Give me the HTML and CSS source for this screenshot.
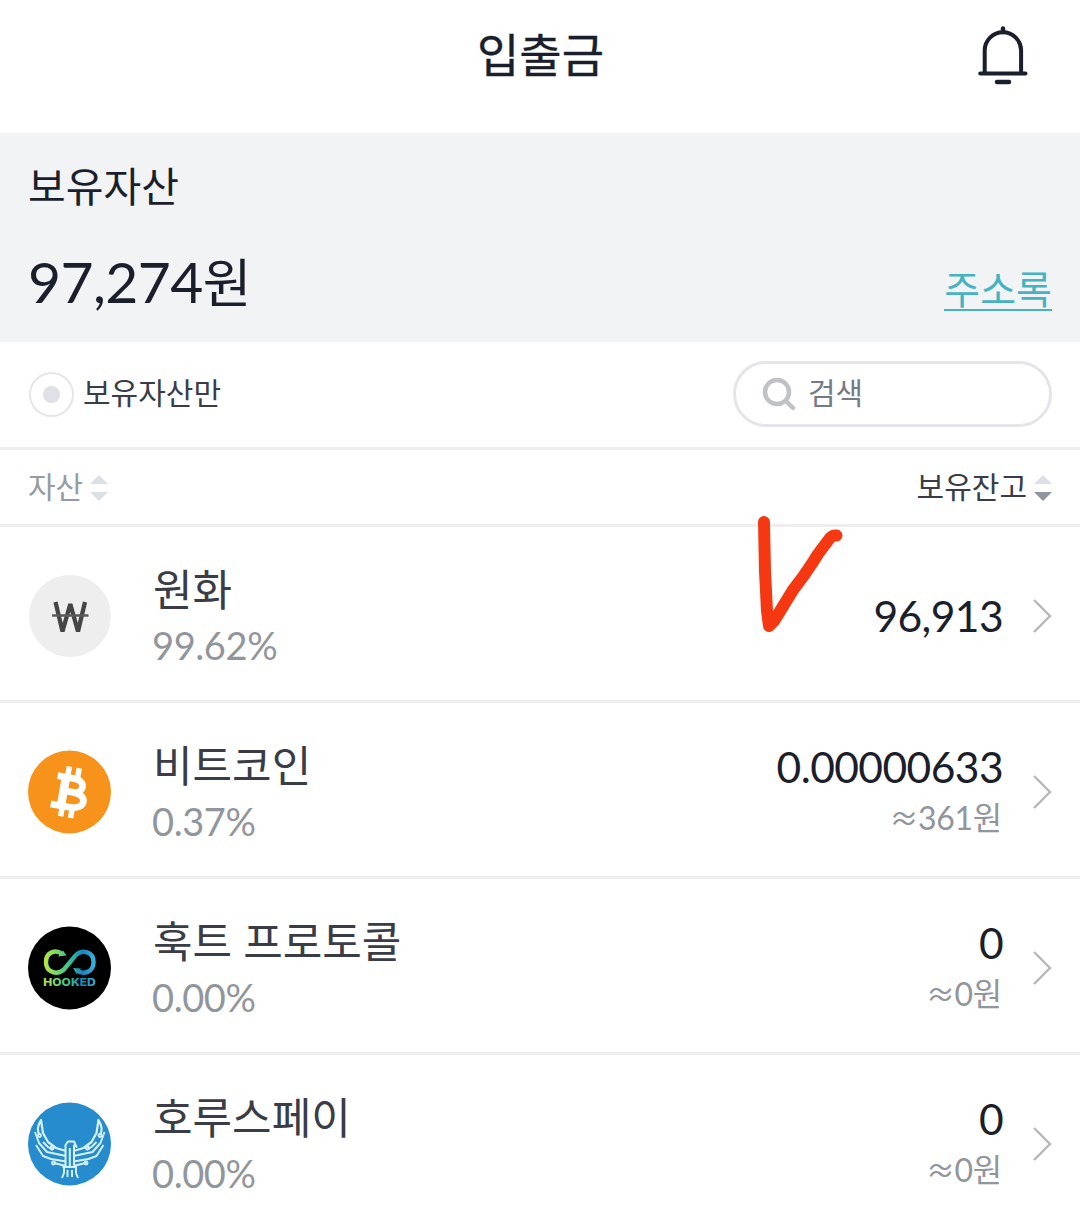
FILE: index.html
```html
<!DOCTYPE html>
<html lang="ko">
<head>
  <meta charset="UTF-8" />
  <title>입출금</title>
  <link rel="stylesheet" href="styles.css">
</head>
<body>
  <header class="header">
    <h1>입출금</h1>
    <svg class="bell" width="52" height="62" viewBox="0 0 52 62" fill="none" stroke="#1b1f2b" stroke-width="4" stroke-linecap="round">
      <path d="M7.700 49V26.500a18.200 18.200 0 0 1 36.400 0V49M3.200 49.400H48.500"/>
      <path d="M20 58H32M26 4.500V8" stroke-width="4.500"/>
    </svg>
  </header>

  <section class="summary">
    <p class="summary-label">보유자산</p>
    <div class="summary-row">
      <strong class="total">97,274<span>원</span></strong>
      <a class="address">주소록</a>
    </div>
  </section>

  <div class="filter">
    <label class="only"><span class="radio"></span><span class="text">보유자산만</span></label>
    <div class="search">
      <svg width="34" height="34" viewBox="0 0 34 34" fill="none" stroke="#bfc2c7" stroke-width="4.500" stroke-linecap="round">
        <circle cx="15" cy="15" r="12"/>
        <path d="M24 24L31 31"/>
      </svg>
      <span class="text">검색</span>
    </div>
  </div>

  <div class="list-head">
    <div class="sort muted"><span class="text">자산</span>
      <svg width="18" height="26" viewBox="0 0 18 26"><path d="M0 9L9 0L18 9Z" fill="#dcdfe3"/><path d="M0 17L9 26L18 17Z" fill="#dcdfe3"/></svg>
    </div>
    <div class="sort"><span class="text">보유잔고</span>
      <svg width="18" height="26" viewBox="0 0 18 26"><path d="M0 9L9 0L18 9Z" fill="#dcdfe3"/><path d="M0 17L9 26L18 17Z" fill="#91969e"/></svg>
    </div>
  </div>

  <ul class="assets">
    <li class="asset">
      <svg class="coin" viewBox="0 0 84 84">
        <circle cx="42" cy="42" r="41" fill="#eee"/>
        <path d="M27.500 28L34.500 57.500L42.300 30L50 57.500L57 28" fill="none" stroke="#454545" stroke-width="4.300" stroke-linejoin="bevel"/>
        <path d="M24 41.500H60.500" stroke="#5a5a5a" stroke-width="2.600"/>
      </svg>
      <div class="info"><p class="name">원화</p><p class="rate">99.62%</p></div>
      <div class="balance"><p class="amount">96,913</p></div>
      <svg class="arrow" viewBox="0 0 20 36"><path d="M2 2L18 18L2 34"/></svg>
      <!-- 손으로 그린 체크 표시 -->
      <svg class="mark" width="90" height="124" viewBox="0 0 90 124">
        <path d="M10 11L11 60L13 100L15 115L20 110L39 79Q50 65 59 51L64 43L76 27Q79 24 82.500 24.500"/>
      </svg>
    </li>
    <li class="asset">
      <svg class="coin" viewBox="0 0 84 84">
        <circle cx="41.500" cy="42" r="41.500" fill="#f7931a"/>
        <g transform="rotate(10 42 42)" fill="none" stroke="#fff">
          <path d="M27 28H44C56.500 28 56.500 41.800 44 41.800H36M45 41.800C61 41.800 60.500 57 45 57H25" stroke-width="6.800"/>
          <path d="M35.500 27V58" stroke-width="8.500"/>
          <path d="M37 17V28M47 17V28M37 57V67.500M47 57V67.500" stroke-width="5.500"/>
        </g>
      </svg>
      <div class="info"><p class="name">비트코인</p><p class="rate">0.37%</p></div>
      <div class="balance"><p class="amount">0.00000633</p><p class="krw"><i>≈</i>361원</p></div>
      <svg class="arrow" viewBox="0 0 20 36"><path d="M2 2L18 18L2 34"/></svg>
    </li>
    <li class="asset">
      <svg class="coin" viewBox="0 0 84 84">
        <defs>
          <linearGradient id="hook" gradientUnits="userSpaceOnUse" x1="16" y1="0" x2="68" y2="0">
            <stop offset="0" stop-color="#b5e842"/>
            <stop offset=".45" stop-color="#43c58b"/>
            <stop offset=".75" stop-color="#1685c4"/>
            <stop offset="1" stop-color="#3cb8e0"/>
          </linearGradient>
        </defs>
        <circle cx="41.500" cy="42" r="41.500" fill="#000"/>
        <path d="M34 28C28 23 18 26 18 36C18 46.500 29 49.500 36 43.500L47.500 29.500C54.500 22.500 65.500 26 65.500 36C65.500 46.500 55 49 49 44.500" fill="none" stroke="url(#hook)" stroke-width="4.400"/>
        <path d="M30 30.500L38.500 29.500L35 24.500ZM45 42L53 42.500L48.500 48Z" fill="url(#hook)"/>
        <text x="15.300" y="59.700" textLength="52.500" lengthAdjust="spacingAndGlyphs" class="hooked" fill="url(#hook)">HOOKED</text>
      </svg>
      <div class="info"><p class="name">훅트 프로토콜</p><p class="rate">0.00%</p></div>
      <div class="balance"><p class="amount">0</p><p class="krw"><i>≈</i>0원</p></div>
      <svg class="arrow" viewBox="0 0 20 36"><path d="M2 2L18 18L2 34"/></svg>
    </li>
    <li class="asset">
      <svg class="coin" viewBox="0 0 84 84">
        <circle cx="41.500" cy="42" r="41.500" fill="#268ccd"/>
        <g fill="none" stroke="#d5f2fa" stroke-width="1.900" stroke-linejoin="round">
          <g id="wing">
            <path d="M11 32C9 28 10 23 13 18L15 31L20 40L28 46L38 49" stroke-width="2.200"/>
            <path d="M7 30L11 41L19 50L38 54M15 40L20 45L25 48M8 43L15 54L23 57L38 59.500M26 61L38 64"/>
            <circle cx="11.500" cy="33.500" r="1.500"/>
            <circle cx="24" cy="46" r="1.500"/>
            <circle cx="25.500" cy="61" r="1.500"/>
          </g>
          <use href="#wing" transform="translate(83.500 0) scale(-1 1)"/>
          <path d="M37.500 64V43L40 39.500H46L48.500 45L46 43.500V63M41.800 46V66" stroke-width="2"/>
          <path d="M34.500 65H49M36 65V71L34 76M48 65V71L50 76M39.500 68V75M44 68V75"/>
        </g>
      </svg>
      <div class="info"><p class="name">호루스페이</p><p class="rate">0.00%</p></div>
      <div class="balance"><p class="amount">0</p><p class="krw"><i>≈</i>0원</p></div>
      <svg class="arrow" viewBox="0 0 20 36"><path d="M2 2L18 18L2 34"/></svg>
    </li>
  </ul>
</body>
</html>
```
FILE: styles.css
```css
* {
  box-sizing: border-box;
}

html, body {
  margin: 0;
  padding: 0;
  height: 100%;
  overflow: hidden;
}

body {
  background: #fff;
  color: #1b1f2b;
  font-family: Lato, "Noto Sans CJK KR", sans-serif;
}

h1, p, ul {
  margin: 0;
  padding: 0;
  font-weight: 400;
}

svg {
  display: block;
  flex: none;
}

.header {
  display: grid;
  grid-template-columns: 1fr auto 1fr;
  height: 133px;
  padding: 24px 51px 0 52px;
}

.header h1 {
  grid-column: 2;
  font-size: 46px;
  line-height: 62px;
  -webkit-text-stroke: 0.4px #1b1f2b;
}

.bell {
  justify-self: end;
}

.summary {
  height: 209px;
  padding: 28px 28px 0;
  background: #f1f3f5;
}

.summary-label {
  font-size: 41px;
  line-height: 52px;
}

.summary-row {
  display: flex;
  justify-content: space-between;
  margin-top: 32px;
}

.total {
  font-size: 57px;
  font-weight: 400;
  line-height: 72px;
  letter-spacing: -0.6px;
}

.total span {
  font-size: 53px;
}

.address {
  align-self: flex-start;
  height: 46px;
  margin-top: 20px;
  border-bottom: 2px solid #46b3c0;
  color: #46b3c0;
  font-size: 39px;
  line-height: 48px;
}

.filter {
  display: flex;
  justify-content: space-between;
  align-items: center;
  height: 108px;
  padding: 0 28px 1px 29px;
  border-bottom: 3px solid #eee;
}

.only {
  display: flex;
  align-items: center;
  gap: 9px;
  color: #3a3d46;
  font-size: 30px;
  line-height: 44px;
}

.text {
  padding-bottom: 4px;
}

.radio {
  width: 45px;
  height: 45px;
  border: 2px solid #e5e6e9;
  border-radius: 50%;
  background: radial-gradient(circle, #dfe1e6 8px, #fff 9px);
}

.search {
  display: flex;
  align-items: center;
  gap: 12px;
  width: 319px;
  height: 66px;
  padding-left: 26px;
  border: 3px solid #e3e5e8;
  border-radius: 33px;
  color: #737a82;
  font-size: 30px;
  line-height: 44px;
}

.list-head {
  display: flex;
  justify-content: space-between;
  align-items: center;
  height: 77px;
  padding: 2px 28px 0;
  border-bottom: 3px solid #eee;
}

.sort {
  display: flex;
  align-items: center;
  gap: 7px;
  color: #3a3d46;
  font-size: 30px;
  line-height: 44px;
}

.muted {
  color: #979a9f;
}

.assets {
  list-style: none;
}

.asset {
  position: relative;
  display: flex;
  align-items: center;
  height: 176px;
  padding: 5px 28px 0;
  border-bottom: 3px solid #eee;
}

.coin {
  width: 84px;
  height: 84px;
}

.info {
  flex: 1;
  margin-left: 40px;
}

.name {
  padding-left: 1px;
  color: #3a3d46;
  font-size: 43px;
  line-height: 58px;
}

.rate {
  color: #91969c;
  font-size: 38px;
  line-height: 52px;
  letter-spacing: -0.4px;
}

.balance {
  text-align: right;
}

.amount {
  font-size: 42.6px;
  line-height: 50px;
  letter-spacing: -0.6px;
}

.krw {
  padding-right: 1px;
  color: #91969c;
  font-size: 32px;
  line-height: 50px;
  letter-spacing: -0.3px;
}

.krw i {
  font-family: "Noto Sans CJK KR", sans-serif;
  font-size: 29px;
  font-style: normal;
}

.arrow {
  width: 20px;
  height: 36px;
  margin-left: 29px;
  fill: none;
  stroke: #b5b7bb;
  stroke-width: 2.4;
}

.mark {
  position: absolute;
  left: 754px;
  top: -16px;
  fill: none;
  stroke: #f63812;
  stroke-width: 12;
  stroke-linecap: round;
  stroke-linejoin: round;
  overflow: visible;
}

.hooked {
  font: 800 10.5px Inter, sans-serif;
}
```
